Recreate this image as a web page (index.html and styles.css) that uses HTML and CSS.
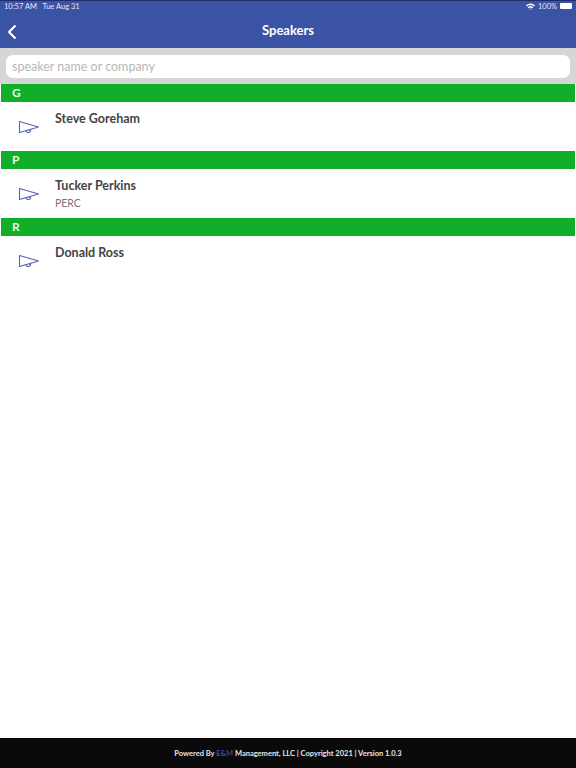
FILE: index.html
```html
<!DOCTYPE html>
<html lang="en">
  <head>
    <meta charset="UTF-8" />
    <title>Speakers</title>
    <link rel="stylesheet" href="styles.css">
  </head>
  <body>
    <svg class="icon-defs" width="0" height="0">
      <symbol id="megaphone" viewBox="0 0 22 14">
        <path d="M1.5 1.5 L20.5 7 L1.5 12.5 Z M8 10.6 C8.5 13.4 12.5 13.2 12.6 9.4" fill="none" stroke="#5563b0" stroke-width="1.1" stroke-linejoin="round" />
      </symbol>
    </svg>

    <header class="topbar">
      <div class="status-bar">
        <span>10:57 AM&nbsp;&nbsp; Tue Aug 31</span>
        <div class="status-right">
          <svg class="wifi" viewBox="0 0 12 9" width="9" height="7">
            <path d="M0 3 A8.5 8.5 0 0 1 12 3 L10.6 4.5 A6.5 6.5 0 0 0 1.4 4.5 Z M2.4 5.5 A5 5 0 0 1 9.6 5.5 L8.2 7 A3 3 0 0 0 3.8 7 Z M4.7 7.9 A2 2 0 0 1 7.3 7.9 L6 9 Z" fill="#fff" />
          </svg>
          <span>100%</span>
          <div class="battery"></div>
        </div>
      </div>
      <nav class="navbar">
        <svg class="back" viewBox="0 0 10 16" width="10" height="16">
          <path d="M8.5 1.5 L2 8 L8.5 14.5" fill="none" stroke="#fff" stroke-width="2.2" />
        </svg>
        <h1>Speakers</h1>
      </nav>
    </header>

    <div class="search-band">
      <input class="search-input" type="text" placeholder="speaker name or company" />
    </div>

    <main class="speaker-list">
      <div class="letter-bar">G</div>
      <div class="speaker-row">
        <svg class="speaker-icon" width="22" height="14"><use href="#megaphone" /></svg>
        <div class="speaker-info">
          <div class="speaker-name">Steve Goreham</div>
        </div>
      </div>

      <div class="letter-bar">P</div>
      <div class="speaker-row">
        <svg class="speaker-icon" width="22" height="14"><use href="#megaphone" /></svg>
        <div class="speaker-info">
          <div class="speaker-name">Tucker Perkins</div>
          <div class="speaker-company">PERC</div>
        </div>
      </div>

      <div class="letter-bar">R</div>
      <div class="speaker-row">
        <svg class="speaker-icon" width="22" height="14"><use href="#megaphone" /></svg>
        <div class="speaker-info">
          <div class="speaker-name">Donald Ross</div>
        </div>
      </div>
    </main>

    <footer class="footer">
      <span>Powered By <span class="brand-e">E&amp;</span><span class="brand-m">M</span> Management, LLC | Copyright 2021 | Version 1.0.3</span>
    </footer>
  </body>
</html>
```

FILE: styles.css
```css
* {
  margin: 0;
  padding: 0;
  box-sizing: border-box;
  font-family: "Lato", sans-serif;
}

html,
body {
  height: 100%;
}

body {
  display: flex;
  flex-direction: column;
  background-color: #ffffff;
  color: #444444;
}

.icon-defs {
  position: absolute;
}

.topbar {
  height: 48px;
  background-color: #3a53a4;
  border-top: 1px solid #1f2d6b;
  color: #ffffff;
}

.status-bar {
  display: flex;
  justify-content: space-between;
  align-items: center;
  height: 10px;
  padding: 0 4px 0 4px;
  font-size: 7.5px;
  color: #e4e8f4;
}

.status-right {
  display: flex;
  align-items: center;
  gap: 3px;
}

.battery {
  width: 12px;
  height: 6px;
  background-color: #ffffff;
  border-radius: 1px;
}

.navbar {
  display: flex;
  align-items: center;
  justify-content: center;
  position: relative;
  height: 37px;
}

.navbar h1 {
  font-size: 13px;
  font-weight: 700;
}

.back {
  position: absolute;
  left: 7px;
  top: 13px;
}

.search-band {
  height: 36px;
  padding: 7px 6px 6px;
  background-color: #d6d6d6;
}

.search-input {
  display: block;
  width: 100%;
  height: 23px;
  padding: 0 6px;
  border: none;
  border-radius: 7px;
  background-color: #ffffff;
  font-size: 12.5px;
  outline: none;
}

.search-input::placeholder {
  color: #b8b8b8;
  opacity: 1;
}

.speaker-list {
  flex: 1;
}

.letter-bar {
  height: 18px;
  margin: 0 1px;
  padding-left: 11px;
  background-color: #10ae29;
  color: #e8f8ea;
  font-size: 12px;
  font-weight: 700;
  line-height: 18px;
}

.speaker-row {
  display: flex;
  height: 49px;
  padding: 10px 0 0 18px;
}

.speaker-icon {
  margin-top: 8px;
  flex-shrink: 0;
}

.speaker-info {
  margin-left: 15px;
}

.speaker-name {
  font-size: 12.5px;
  font-weight: 700;
  line-height: 14px;
  color: #444444;
}

.speaker-company {
  margin-top: 4px;
  font-size: 10.5px;
  line-height: 12px;
  color: #777777;
}

.footer {
  display: flex;
  align-items: center;
  justify-content: center;
  height: 30px;
  background-color: #0a0a0a;
  color: #e6e6e6;
  font-size: 7.5px;
  font-weight: 700;
}

.brand-e {
  color: #3a53a4;
}

.brand-m {
  color: #5a3a7a;
}
```
